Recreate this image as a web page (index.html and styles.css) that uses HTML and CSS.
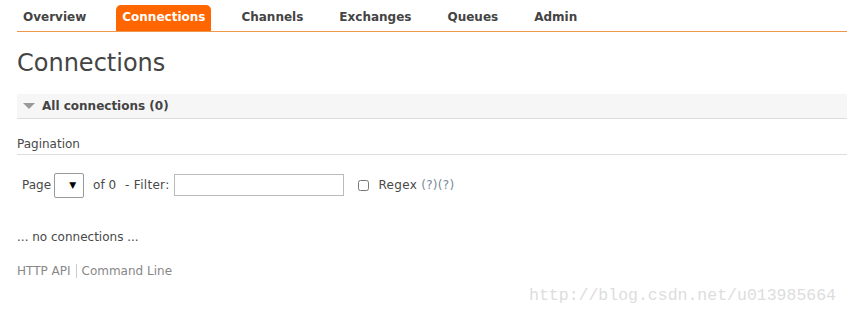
FILE: index.html
```html
<!DOCTYPE html>
<html lang="en">
<head>
    <meta charset="UTF-8">
    <title>RabbitMQ Management</title>
    <link rel="stylesheet" href="styles.css">
</head>
<body>

<div class="page">
    <!-- Menu principale -->
    <ul class="tabs">
        <li><a href="#">Overview</a></li>
        <li class="selected"><a href="#">Connections</a></li>
        <li><a href="#">Channels</a></li>
        <li><a href="#">Exchanges</a></li>
        <li><a href="#">Queues</a></li>
        <li><a href="#">Admin</a></li>
    </ul>

    <h1>Connections</h1>

    <div class="section">
        <h2><span class="arrow"></span>All connections (0)</h2>

        <h3>Pagination</h3>
        <div class="filter">
            <span>Page</span>
            <span class="select-box">&#9660;</span>
            <span class="of">of 0</span>
            <span class="label">- Filter:</span>
            <input type="text" class="filter-text">
            <input type="checkbox" class="regex-box">
            <span class="label">Regex <span class="help">(?)(?)</span></span>
        </div>

        <p class="empty">... no connections ...</p>
    </div>

    <div class="footer">
        <a href="#">HTTP API</a><a href="#">Command Line</a>
    </div>
</div>

<div class="watermark">http://blog.csdn.net/u013985664</div>

</body>
</html>
```

FILE: styles.css
```css
    body {
        font-family: "DejaVu Sans", Verdana, sans-serif;
        font-size: 12px;
        color: #484848;
        margin: 0;
        background-color: #fff;
    }
    .page {
        padding: 5px 0 0 17px;
    }
    .tabs {
        list-style: none;
        margin: 0;
        padding: 0;
        display: flex;
        border-bottom: 1px solid #f09849;
        height: 26px;
    }
    .tabs li a {
        display: block;
        padding: 0 6px;
        height: 26px;
        line-height: 25px;
        font-weight: bold;
        font-size: 12px;
        color: #444;
        text-decoration: none;
        border-radius: 5px 5px 0 0;
        margin-right: 24px;
    }
    .tabs li.selected a {
        background-color: #f60;
        color: #fff;
    }
    h1 {
        font-size: 24px;
        font-weight: normal;
        color: #444;
        margin: 16px 0 16px 0;
        line-height: 30px;
    }
    h2 {
        margin: 0;
        background-color: #f6f6f6;
        border-bottom: 1px solid #ddd;
        height: 24px;
        line-height: 24px;
        font-size: 12px;
        font-weight: bold;
        color: #444;
        display: flex;
        align-items: center;
    }
    .arrow {
        width: 0;
        height: 0;
        border-left: 6px solid transparent;
        border-right: 6px solid transparent;
        border-top: 6px solid #999;
        margin: 0 7px 0 6px;
    }
    h3 {
        font-size: 12px;
        font-weight: normal;
        color: #484848;
        margin: 18px 0 0 0;
        padding-bottom: 3px;
        border-bottom: 1px solid #ddd;
    }
    .filter {
        display: flex;
        align-items: center;
        margin: 17px 0 0 5px;
        height: 26px;
    }
    .select-box {
        width: 21px;
        height: 23px;
        border: 1px solid #999;
        border-radius: 2px;
        font-size: 9px;
        color: #000;
        text-align: right;
        line-height: 23px;
        padding-right: 7px;
        margin-left: 3px;
    }
    .of {
        margin: 0 9px 0 9px;
    }
    .label {
        letter-spacing: 0.3px;
    }
    .filter-text {
        width: 168px;
        height: 20px;
        border: 1px solid #bbb;
        margin: 0 0 0 5px;
        padding: 0;
    }
    .regex-box {
        width: 11px;
        height: 11px;
        margin: 0 9px 0 14px;
    }
    .help {
        color: #789;
    }
    .empty {
        margin: 32px 0 0 0;
    }
    .footer {
        margin-top: 20px;
        display: flex;
    }
    .footer a {
        color: #888;
        text-decoration: none;
        padding-right: 5px;
    }
    .footer a + a {
        border-left: 1px solid #ccc;
        padding-left: 5px;
    }
    .watermark {
        position: absolute;
        right: 11px;
        bottom: 10px;
        font-family: "Liberation Mono", monospace;
        font-size: 16.5px;
        color: #ddd;
    }
```
